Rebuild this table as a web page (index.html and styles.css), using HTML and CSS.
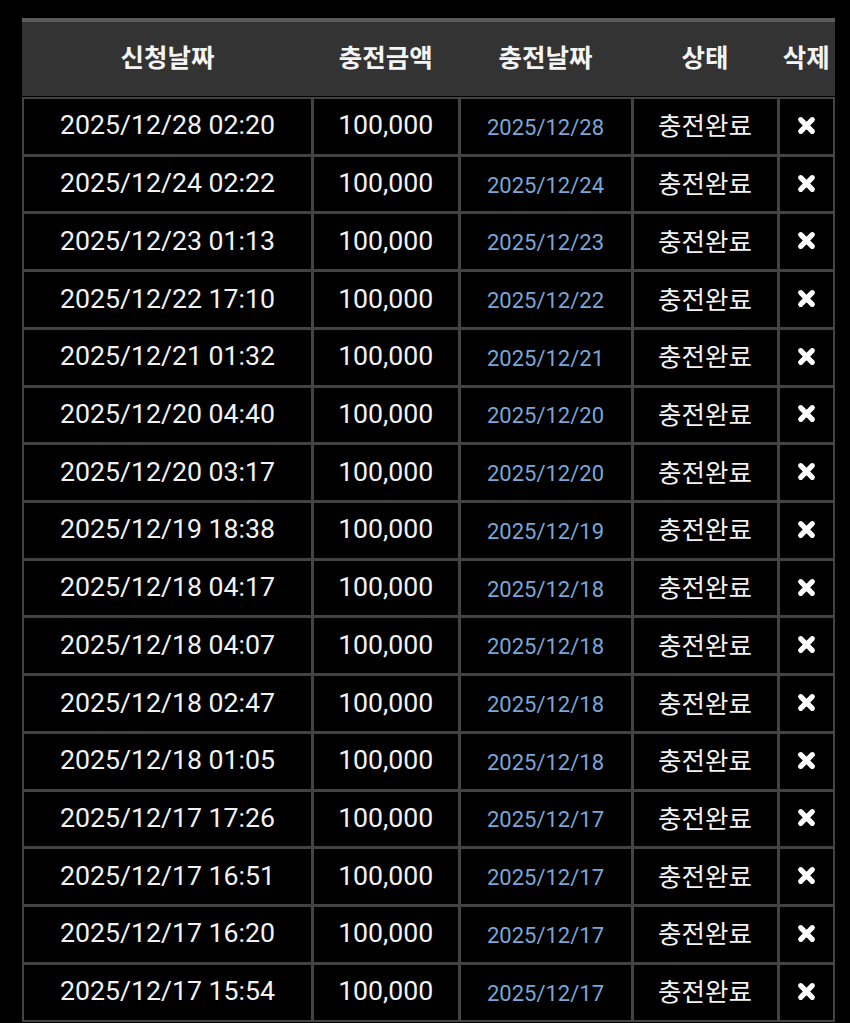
FILE: index.html
```html
<!DOCTYPE html>
<html lang="ko">
<head>
<meta charset="utf-8">
<link rel="stylesheet" href="styles.css">
</head>
<body>
<div class="wrap">
  <div class="head">
    <div class="hcell">신청날짜</div>
    <div class="hcell">충전금액</div>
    <div class="hcell">충전날짜</div>
    <div class="hcell">상태</div>
    <div class="hcell">삭제</div>
  </div>
  <div class="grid" id="grid"></div>
</div>
<script src="app.js"></script>
</body>
</html>
```
FILE: styles.css
```css
html, body { margin: 0; padding: 0; background: #000; }
body { font-family: Roboto, "Noto Sans CJK KR", sans-serif; color: #f2f2f2; }
.wrap { margin: 18px 0 0 22px; width: 813px; }
.head {
  border-top: 4px solid #5b5b5b;
  background: #333;
  height: 73.5px;
  display: grid;
  grid-template-columns: 287px 143.5px 170px 143px 53.5px;
  column-gap: 3px;
  padding: 0 2px;
  box-sizing: content-box;
}
.hcell {
  display: flex; align-items: center; justify-content: center;
  font-family: "Noto Sans CJK KR", sans-serif;
  font-weight: 700; font-size: 25.5px; color: #f4f4f4;
  padding-bottom: 6px;
  white-space: nowrap;
}
.grid {
  margin-top: 1.5px;
  display: grid;
  grid-template-columns: 287px 143.5px 170px 143px 53.5px;
  grid-auto-rows: 54.73px;
  gap: 3px;
  padding: 2px;
  background: #434343;
}
.cell {
  background: #000;
  display: flex; align-items: center; justify-content: center;
  font-size: 26.7px;
  padding-bottom: 2px;
  white-space: nowrap;
}
.date2 { color: #7aa6d8; font-size: 22px; padding-top: 2px; padding-bottom: 0; }
.status { font-family: "Noto Sans CJK KR", sans-serif; font-size: 25.5px; padding-bottom: 5px; }
.del svg { width: 21px; height: 21px; display: block; }
```
FILE: app.js
```js
var times = ["2025/12/28 02:20","2025/12/24 02:22","2025/12/23 01:13","2025/12/22 17:10","2025/12/21 01:32","2025/12/20 04:40","2025/12/20 03:17","2025/12/19 18:38","2025/12/18 04:17","2025/12/18 04:07","2025/12/18 02:47","2025/12/18 01:05","2025/12/17 17:26","2025/12/17 16:51","2025/12/17 16:20","2025/12/17 15:54"];
var g = document.getElementById("grid");
var x = '<svg viewBox="0 0 20 20"><path d="M4.5 4.5 L15.5 15.5 M15.5 4.5 L4.5 15.5" stroke="#fff" stroke-width="5" stroke-linecap="round"/></svg>';
var html = "";
times.forEach(function (t) {
  html += '<div class="cell">' + t + '</div>' +
    '<div class="cell">100,000</div>' +
    '<div class="cell date2">' + t.split(" ")[0] + '</div>' +
    '<div class="cell status">충전완료</div>' +
    '<div class="cell del">' + x + '</div>';
});
g.innerHTML = html;
```
